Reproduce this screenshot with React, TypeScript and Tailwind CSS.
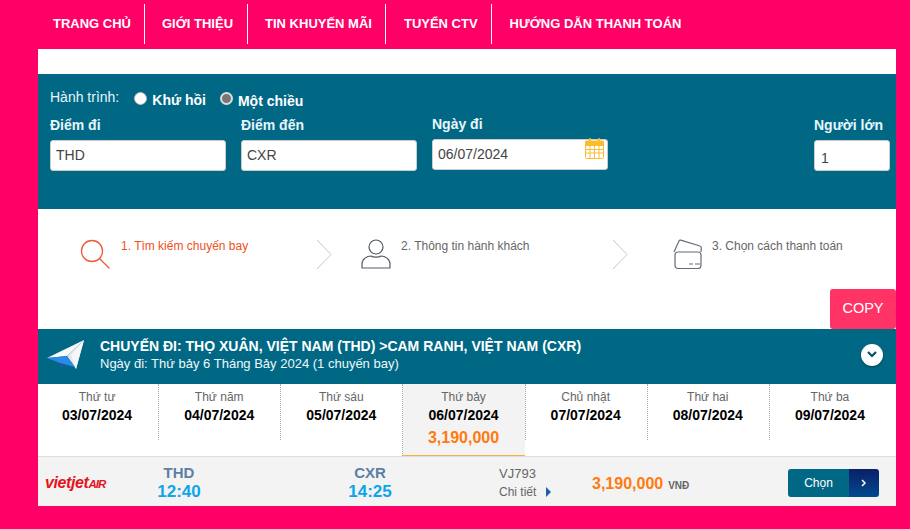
const navItems = [
  { label: "TRANG CHỦ", className: "pl-[15px] pr-[13px] border-r" },
  { label: "GIỚI THIỆU", className: "pl-[17px] pr-[14px] border-r" },
  { label: "TIN KHUYẾN MÃI", className: "pl-[17px] pr-[13px] border-r" },
  { label: "TUYỂN CTV", className: "pl-[18px] pr-[13px] border-r" },
  { label: "HƯỚNG DẪN THANH TOÁN", className: "pl-[18px]" },
];

const days = [
  { name: "Thứ tư", date: "03/07/2024" },
  { name: "Thứ năm", date: "04/07/2024" },
  { name: "Thứ sáu", date: "05/07/2024" },
  { name: "Thứ bảy", date: "06/07/2024", price: "3,190,000" },
  { name: "Chủ nhật", date: "07/07/2024" },
  { name: "Thứ hai", date: "08/07/2024" },
  { name: "Thứ ba", date: "09/07/2024" },
];

function Field({ label, value, className, inputClass }: { label: string; value: string; className: string; inputClass?: string }) {
  return (
    <div className={className}>
      <div className="h-[20px] text-[14px] leading-[20px] font-bold text-[#e8f6fb]">{label}</div>
      <div className={`mt-[5px] flex h-[31px] items-center rounded-[3px] border border-[#ccc] bg-white px-[5px] text-[14px] text-[#444] ${inputClass ?? ""}`}>
        {value}
      </div>
    </div>
  );
}

function Chevron({ className }: { className: string }) {
  return (
    <svg className={className} width="16" height="31" viewBox="0 0 16 31" fill="none" stroke="#c8c8c8" strokeWidth="1">
      <path d="M1 1l14 14.5L1 30" />
    </svg>
  );
}

export default function App() {
  return (
    <div className="h-[529px] overflow-hidden bg-[#ff0066] font-['Liberation_Sans',Arial,sans-serif]">
      <nav className="flex h-[49px] pl-[38px] pt-[4px]">
        {navItems.map((item) => (
          <div key={item.label} className={`flex h-[40px] items-center border-white pb-[1px] text-[13px] font-bold text-white ${item.className}`}>
            {item.label}
          </div>
        ))}
      </nav>

      <main className="relative ml-[38px] w-[858px] bg-white">
        <div className="h-[25px]" />

        <section className="h-[135px] bg-[#006885] pl-[12px] pt-[14px] text-white">
          <div className="flex h-[27px] items-start">
            <span className="mt-[1px] text-[14px] leading-[16px] text-[#e8f6fb]">Hành trình:</span>
            <span className="ml-[15px] mt-[4px] h-[13px] w-[13px] rounded-full border border-[#bbb] bg-white" />
            <span className="ml-[5px] mt-[4px] text-[14px] leading-[16px] font-bold">Khứ hồi</span>
            <span className="ml-[14px] mt-[4px] h-[13px] w-[13px] rounded-full border-2 border-[#ddd] bg-[#777]" />
            <span className="ml-[5px] mt-[5px] text-[14px] leading-[16px] font-bold">Một chiều</span>
          </div>
          <div className="flex">
            <Field label="Điểm đi" value="THD" className="w-[176px]" />
            <Field label="Điểm đến" value="CXR" className="ml-[15px] w-[176px]" />
            <div className="relative ml-[15px] -mt-[1px] w-[176px]">
              <div className="h-[20px] text-[14px] leading-[20px] font-bold text-[#e8f6fb]">Ngày đi</div>
              <div className="mt-[5px] flex h-[31px] items-center rounded-[3px] border border-[#ccc] bg-white px-[5px] text-[14px] text-[#444]">
                06/07/2024
              </div>
              <svg className="absolute left-[153px] top-[24px]" width="19" height="21" viewBox="0 0 19 21" fill="none">
                <rect x="0.5" y="3" width="18" height="17.5" rx="1" fill="#fff" stroke="#fdbb30" />
                <rect x="0.5" y="3" width="18" height="5" fill="#fdbb30" />
                <rect x="4" y="0" width="2" height="5" rx="1" fill="#fdbb30" />
                <rect x="13" y="0" width="2" height="5" rx="1" fill="#fdbb30" />
                <path d="M5 8v12M9.500 8v12M14 8v12M1 11.500h17M1 15h17" stroke="#fdbb30" strokeWidth="1" />
              </svg>
            </div>
            <Field label="Người lớn" value="1" className="ml-[206px] w-[76px]" inputClass="pl-[6px] pt-[5px]" />
          </div>
        </section>

        <section className="h-[120px] pl-[42px] pt-[30px]">
          <div className="flex items-start">
            <div className="flex w-[236px] items-start gap-[10px]">
              <svg width="31" height="30" viewBox="0 0 31 30" fill="none" stroke="#f0573a" strokeWidth="1.300">
                <circle cx="12" cy="12" r="10.500" />
                <path d="M19.500 19.500L29.500 29.500" />
              </svg>
              <span className="text-[12px] leading-[14px] text-[#f0501e]">1. Tìm kiếm chuyến bay</span>
            </div>
            <Chevron className="shrink-0" />
            <div className="ml-[29px] flex w-[251px] items-start gap-[10px]">
              <svg width="30" height="30" viewBox="0 0 30 30" fill="none" stroke="#555a66" strokeWidth="1.200">
                <circle cx="15" cy="8" r="7" />
                <path d="M1 29v-4c0-5 5-8 9-8 2 1.500 8 1.500 10 0 4 0 9 3 9 8v4z" />
              </svg>
              <span className="text-[12px] leading-[14px] text-[#666]">2. Thông tin hành khách</span>
            </div>
            <Chevron className="shrink-0" />
            <div className="ml-[45px] flex items-start gap-[9px]">
              <svg width="30" height="30" viewBox="0 0 30 30" fill="none" stroke="#666b78" strokeWidth="1.200">
                <rect x="2" y="13" width="26" height="16.500" rx="3" />
                <path d="M1 13l5-11c.3-.7 1-1 1.700-.8L27 7c.8.200 1.400 1 1.300 2L28 13" />
                <path d="M16 25h4M22 25h5" />
              </svg>
              <span className="text-[12px] leading-[14px] text-[#666]">3. Chọn cách thanh toán</span>
            </div>
          </div>
        </section>

        <button className="absolute right-0 top-[240px] h-[40px] w-[66px] rounded-[3px] bg-[#ff3366] text-[14.500px] text-white">
          COPY
        </button>

        <section className="flex h-[55px] items-center bg-[#006885] pl-[9px] pr-[13px]">
          <svg width="38" height="33" viewBox="0 0 38 33">
            <path d="M37 0L0 18l20-2z" fill="#f7f9fb" />
            <path d="M37 0L20 16l9 13z" fill="#e3e7eb" />
            <path d="M37 0L24 15l5 14z" fill="#f5f7f9" />
            <path d="M0 18l20-2 8 11-15-4z" fill="#2b8ae6" />
            <path d="M13 23v6l6-4z" fill="#1a5ca3" />
          </svg>
          <div className="ml-[15px] flex-1 pb-[4px] text-white">
            <div className="text-[14px] leading-[18px] font-bold">CHUYẾN ĐI: THỌ XUÂN, VIỆT NAM (THD) &gt;CAM RANH, VIỆT NAM (CXR)</div>
            <div className="text-[13px] leading-[18px] text-[#eef8fb]">Ngày đi: Thứ bảy 6 Tháng Bảy 2024 (1 chuyến bay)</div>
          </div>
          <span className="mb-[4px] flex h-[22px] w-[22px] items-center justify-center rounded-full bg-white shadow-[0_1px_2px_rgba(0,0,0,0.4)]">
            <svg width="10" height="7" viewBox="0 0 10 7" fill="none" stroke="#0b4a63" strokeWidth="2.200">
              <path d="M1 1l4 4 4-4" />
            </svg>
          </span>
        </section>

        <section className="h-[73px] border-b border-[#ddd]">
          <div className="-ml-[2px] grid w-[855px] grid-cols-7">
            {days.map((d, i) => (
              <div key={d.date} className="relative h-[72px] text-center">
                {d.price && <div className="absolute inset-y-0 left-[1px] right-0 border-b border-[#f5b04c] bg-[#f3f3f3]" />}
                <div className="relative pt-[6px]">
                  <div className="text-[12px] leading-[15px] text-[#666]">{d.name}</div>
                  <div className="mt-[1px] text-[14px] leading-[18px] font-bold text-black">{d.date}</div>
                  {d.price && <div className="mt-[4px] text-[16px] leading-[20px] font-bold text-[#ff7a0f]">{d.price}</div>}
                </div>
                {i < days.length - 1 && (
                  <div className={`absolute -right-[1px] top-0 border-r border-dotted border-[#aaa] ${i === 2 ? "h-[72px]" : "h-[56px]"}`} />
                )}
              </div>
            ))}
          </div>
        </section>

        <section className="flex h-[49px] items-center bg-[#f3f3f3] pt-[2px]">
          <span className="ml-[7px] mt-[1px] w-[61px] shrink-0 whitespace-nowrap text-[16px] font-bold italic tracking-[-0.4px] text-[#e3151d]">
            vietjet<span className="text-[11.500px] tracking-[-1px]">AIR</span>
          </span>
          <div className="w-[146px] shrink-0 text-center">
            <div className="text-[15px] leading-[18px] font-bold text-[#5b7fa5]">THD</div>
            <div className="text-[17px] leading-[20px] font-bold text-[#0ea5e9]">12:40</div>
          </div>
          <div className="ml-[45px] w-[146px] shrink-0 text-center">
            <div className="text-[15px] leading-[18px] font-bold text-[#5b7fa5]">CXR</div>
            <div className="text-[17px] leading-[20px] font-bold text-[#0ea5e9]">14:25</div>
          </div>
          <div className="ml-[56px] w-[93px] shrink-0 text-[#666]">
            <div className="text-[13px] leading-[19px]">VJ793</div>
            <div className="flex items-center text-[12px] leading-[19px]">
              Chi tiết
              <span className="ml-[10px] h-0 w-0 border-y-[5px] border-l-[5px] border-y-transparent border-l-[#1f5fa8]" />
            </div>
          </div>
          <div className="flex w-[196px] shrink-0 items-baseline pt-[2px]">
            <span className="text-[16px] font-bold text-[#ff7a0f]">3,190,000</span>
            <span className="ml-[5px] text-[10px] font-bold text-[#666]">VNĐ</span>
          </div>
          <div className="flex h-[28px] w-[91px] shrink-0 overflow-hidden rounded-[3px] text-white">
            <span className="flex w-[61px] items-center justify-center bg-[#006885] text-[12px]">Chọn</span>
            <span className="flex flex-1 items-center justify-center bg-gradient-to-b from-[#0a1f66] to-[#004a8f]">
              <svg width="6" height="8" viewBox="0 0 6 8" fill="none" stroke="#fff" strokeWidth="1.500">
                <path d="M1 1l3 3-3 3" />
              </svg>
            </span>
          </div>
        </section>
      </main>
    </div>
  );
}
